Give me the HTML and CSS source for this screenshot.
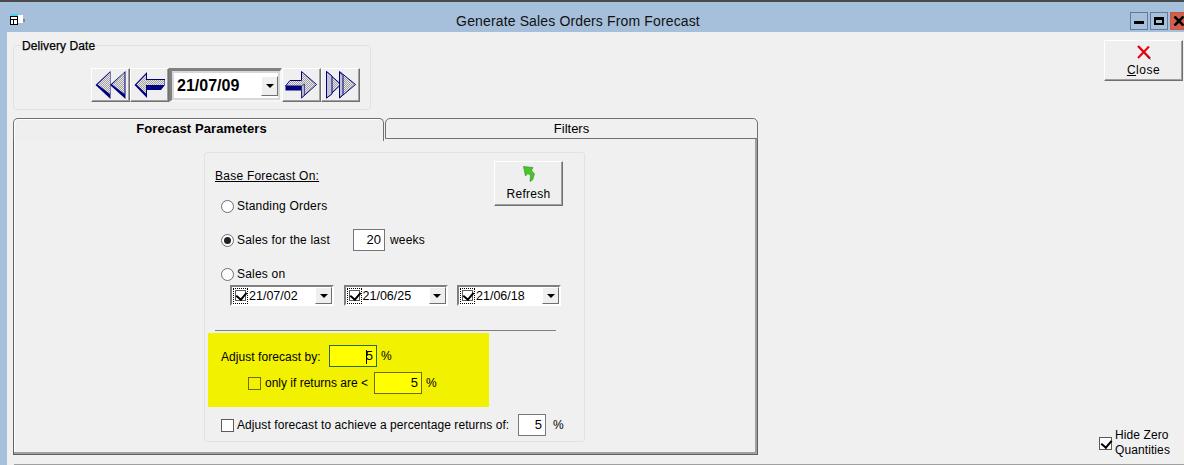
FILE: index.html
```html
<!DOCTYPE html>
<html>
<head>
<meta charset="utf-8">
<title>Generate Sales Orders From Forecast</title>
<link rel="stylesheet" href="styles.css">
</head>
<body>
<svg class="defs" width="0" height="0"><defs>
<pattern id="dither" width="2" height="2" patternUnits="userSpaceOnUse"><rect width="2" height="2" fill="#e8e8e8"/><rect width="1" height="1" fill="#a0a0a0"/><rect x="1" y="1" width="1" height="1" fill="#a0a0a0"/></pattern>
</defs></svg>
<div class="window">
  <header class="titlebar">
    <svg class="appicon" width="16" height="13" viewBox="0 0 16 13"><rect x="1" y="0" width="8" height="2" fill="#3fd6e6"/><rect x="8" y="1" width="5" height="8" fill="#fff"/><rect x="13" y="5" width="2" height="3" fill="#888"/><rect x="0.500" y="2.500" width="7" height="8" fill="#fff" stroke="#000"/><path d="M1 5.500h6M3.500 5v5" stroke="#000"/></svg>
    <h1 class="title">Generate Sales Orders From Forecast</h1>
    <div class="winbtns">
      <span class="winbtn"><i class="g-min"></i></span>
      <span class="winbtn"><i class="g-max"></i></span>
      <span class="winbtn close-x">
        <svg width="12" height="10" viewBox="0 0 12 10"><path d="M1.500 0.500L10.500 9.500M10.500 0.500L1.500 9.500" stroke="#000" stroke-width="2.600"/></svg>
      </span>
    </div>
  </header>
  <main class="client">
    <div class="leftcol">
      <section class="delivery">
        <span class="legend">Delivery Date</span>
        <div class="navrow">
          <button class="navbtn"><svg width="36" height="30" viewBox="0 0 36 30">
            <path d="M2.500 15L17.500 1V29Z" fill="#000080"/>
            <path d="M4.500 14.500L17 2.500V24Z" fill="url(#dither)"/>
            <path d="M17 15L32.500 1V29Z" fill="#000080"/>
            <path d="M19 14.500L31.500 2.500V24Z" fill="url(#dither)"/>
          </svg></button>
          <button class="navbtn"><svg width="36" height="30" viewBox="0 0 36 30">
            <path d="M2.500 15L15 28V20H29L33 15V9H15V2Z" fill="#000080"/>
            <path d="M4.500 14.500L14 4.500V10H32.500V15H14V23.500Z" fill="url(#dither)"/>
          </svg></button>
          <div class="datebox">
            <span class="dateval">21/07/09</span>
            <span class="ddbtn"><i class="caret"></i></span>
          </div>
          <button class="navbtn"><svg width="36" height="30" viewBox="0 0 36 30">
            <path d="M1.500 16V20.500H17.500V16Z" fill="#000080"/>
            <path d="M1.500 16L6 10.500H17.500V1.500L32.500 14.500L17.500 28V16Z" fill="url(#dither)" stroke="#000080"/>
            <path d="M17.500 16V28L20.500 25V14Z" fill="#b8b8c8" stroke="#000080" stroke-width="0.600"/>
          </svg></button>
          <button class="navbtn"><svg width="36" height="30" viewBox="0 0 36 30">
            <path d="M3.500 1.500L18 14.500L3.500 28Z" fill="url(#dither)" stroke="#000080"/>
            <path d="M3.500 1.500L9 6V24L3.500 28Z" fill="#c4c4d0" stroke="#000080"/>
            <path d="M16.500 1.500L32.500 14.500L16.500 28Z" fill="url(#dither)" stroke="#000080"/>
            <path d="M16.500 2L20 5.500V24.500L16.500 28Z" fill="#c4c4d0" stroke="#000080"/>
          </svg></button>
        </div>
      </section>
      <nav class="tabs">
        <div class="tab tab-active">Forecast Parameters</div>
        <div class="tab tab-back">Filters</div>
      </nav>
      <section class="page">
        <div class="group">
          <div class="basehead">
            <div class="baseopts">
              <p class="heading">Base Forecast On:</p>
              <label class="opt opt-first"><i class="radio"></i>Standing Orders</label>
              <label class="opt opt-second"><i class="radio radio-on"></i>Sales for the last<span class="field weeks">20</span><span class="weekslbl">weeks</span></label>
            </div>
            <button class="refresh">
              <svg width="12" height="16" viewBox="0 0 12 16"><path d="M0.500 0.500L10 1.500L8.500 4.500L11.500 8L9.500 14L7 15.500L7.500 9.500L5 7.500L2.500 10Z" fill="#48c42c" stroke="#2e8f1c" stroke-width="0.600"/></svg>
              <span>Refresh</span>
            </button>
          </div>
          <label class="opt opt-third"><i class="radio"></i>Sales on</label>
          <div class="dates">
            <div class="dtp"><span class="focuschk"><i class="chk chk-on"></i></span><span class="dtpval">21/07/02</span><span class="ddbtn"><i class="caret"></i></span></div>
            <div class="dtp"><span class="focuschk"><i class="chk chk-on"></i></span><span class="dtpval">21/06/25</span><span class="ddbtn"><i class="caret"></i></span></div>
            <div class="dtp"><span class="focuschk"><i class="chk chk-on"></i></span><span class="dtpval">21/06/18</span><span class="ddbtn"><i class="caret"></i></span></div>
          </div>
          <hr class="sep">
          <div class="highlight">
            <div class="adj1"><span class="adjlbl">Adjust forecast by:</span><span class="field yfield focus"><i class="cursor"></i>5</span><span class="pct">%</span></div>
            <div class="adj2"><i class="chk ychk"></i><span class="onlylbl">only if returns are &lt;</span><span class="field yfield yfield2">5</span><span class="pct">%</span></div>
          </div>
          <div class="achieve"><i class="chk"></i><span class="achlbl">Adjust forecast to achieve a percentage returns of:</span><span class="field pctfield">5</span><span class="pct pct3">%</span></div>
        </div>
      </section>
    </div>
    <aside class="rightcol">
      <button class="closebtn">
        <svg width="16" height="15" viewBox="0 0 16 15"><path d="M2 1L14 13.500" stroke="#e8000c" stroke-width="2.400"/><path d="M13 1.500L2 13" stroke="#e8000c" stroke-width="2"/><path d="M11 11L14.500 14.500" stroke="#222" stroke-width="0.800"/></svg>
        <span class="closelbl"><u>C</u>lose</span>
      </button>
      <label class="hidezero"><i class="chk chk-on"></i><span>Hide Zero<br>Quantities</span></label>
    </aside>
  </main>
  <div class="bottomline"></div>
</div>
</body>
</html>
```
FILE: styles.css
```css
* { box-sizing: border-box; }
html, body { margin: 0; padding: 0; }
body { width: 1184px; height: 465px; overflow: hidden; background: #f0f0f0; font-family: "Liberation Sans", Arial, sans-serif; font-size: 12px; color: #000; }
.defs { display: block; height: 0; }
button { font: inherit; color: inherit; margin: 0; padding: 0; }
p, h1 { margin: 0; }
i { display: block; font-style: normal; }

.window { height: 465px; display: flex; flex-direction: column; border-top: 2px solid #4a4a4a; background: #a6c0dc; }
.titlebar { flex: none; height: 30px; display: flex; align-items: center; position: relative; padding-left: 10px; }
.title { position: absolute; left: 0; width: 1156px; top: 11px; text-align: center; font-size: 14px; line-height: 16px; font-weight: normal; color: #111; letter-spacing: 0.14px; }
.appicon { margin-top: 6px; }
.winbtns { margin-left: auto; display: flex; gap: 2px; margin-top: 7px; margin-right: -4px; }
.winbtn { width: 18px; height: 18px; border: 1px solid #5f7c9d; display: flex; align-items: center; justify-content: center; background: #a6c0dc; }
.g-min { width: 10px; height: 3px; background: #000; margin-top: 4px; }
.g-max { width: 10px; height: 8px; border: 2px solid #000; border-top-width: 3px; }
.close-x { background: #d0604c; border-color: #c15a48; }

.client { flex: 1; min-height: 0; margin-left: 7px; background: #f0f0f0; display: flex; position: relative; padding: 13px 1px 0 6px; }
.leftcol { width: 745px; flex: none; }
.delivery { height: 65px; width: 358px; border: 1px solid #dce3ec; border-radius: 3px; position: relative; padding: 22px 0 0 77px; }
.legend { position: absolute; left: 7px; top: -7px; background: #f0f0f0; padding: 0 1px; line-height: 14px; font-size: 12px; -webkit-text-stroke: 0.25px #000; letter-spacing: 0.1px; }
.navrow { display: flex; align-items: center; }
.navbtn { width: 39px; height: 34px; background: #efefef; border: 1px solid; border-color: #fff #707070 #707070 #fff; box-shadow: inset -1px -1px 0 #a0a0a0; display: flex; align-items: center; justify-content: center; }
.datebox { width: 113px; height: 34px; border: solid; border-width: 3px 2px 2px 3px; border-color: #808080 #f6f6f6 #f6f6f6 #808080; display: flex; align-items: center; background: #fff; box-shadow: inset 0 0 0 2px #d8d8d8; padding: 0 2px 0 5px; }
.dateval { flex: 1; font-size: 16px; font-weight: bold; line-height: 20px; padding-top: 1px; }
.datebox .ddbtn { height: 20px; }
.ddbtn { width: 17px; height: 18px; background: #efefef; border: 1px solid; border-color: #fff #707070 #707070 #fff; display: flex; align-items: center; justify-content: center; flex: none; }
.caret { width: 0; height: 0; border: 4px solid transparent; border-top: 4px solid #000; border-bottom: 0; }

.tabs { display: flex; margin-top: 8px; height: 21px; }
.tab { text-align: center; line-height: 20px; border: 1px solid #707070; border-bottom: 0; border-radius: 5px 5px 0 0; font-size: 13px; }
.tab-active { width: 371px; padding-left: 6px; font-weight: bold; letter-spacing: 0.1px; background: #efefef; height: 23px; position: relative; z-index: 1; box-shadow: inset 1px 1px 0 #fff; }
.tab-back { width: 373px; margin-left: 1px; border-bottom: 1px solid #707070; }
.page { width: 745px; height: 316px; border: 1px solid #606060; border-top: 0; box-shadow: inset -2px -2px 0 #a0a0a0, inset 1px 0 0 #fff; padding: 13px 0 0 190px; position: relative; }
.group { width: 381px; height: 290px; border: 1px solid #dce3ec; border-radius: 3px; padding: 8px 0 0 10px; }
.basehead { display: flex; height: 106px; }
.baseopts { width: 279px; }
.heading { text-decoration: underline; line-height: 14px; margin-top: 8px; letter-spacing: 0.24px; }
.opt { display: flex; align-items: center; line-height: 14px; padding-left: 6px; letter-spacing: 0.2px; }
.opt-first { margin-top: 16px; }
.opt-second { margin-top: 16px; height: 22px; }
.opt-third { margin-top: 0; }
.radio { width: 13px; height: 13px; border: 1px solid #6e6e6e; border-radius: 50%; background: #fff; margin-right: 3px; position: relative; flex: none; }
.radio-on::after { content: ""; position: absolute; left: 2px; top: 2px; width: 7px; height: 7px; background: #222; border-radius: 50%; }
.field { display: block; height: 22px; border: 1px solid #767676; background: #fff; text-align: right; line-height: 20px; padding-right: 3px; font-size: 13px; position: relative; letter-spacing: 0; }
.weeks { width: 32px; margin-left: 23px; }
.weekslbl { margin-left: 5px; }
.refresh { width: 69px; height: 45px; background: #efefef; border: 1px solid; border-color: #fff #707070 #707070 #fff; box-shadow: inset -1px -1px 0 #a0a0a0; display: flex; flex-direction: column; align-items: center; padding-top: 4px; line-height: 14px; letter-spacing: 0.3px; }
.refresh span { margin-top: 5px; }
.dates { display: flex; gap: 9.5px; margin: 4px 0 0 15px; }
.dtp { width: 104px; height: 21px; border: 2px solid #808080; border-right-color: #fff; border-bottom-color: #fff; background: #fff; display: flex; align-items: center; padding: 0 0 0 1px; }
.dtp .ddbtn { height: 17px; }
.focuschk { width: 15px; height: 16px; border: 1px dotted #000; display: flex; align-items: center; justify-content: center; flex: none; }
.focuschk .chk { width: 11px; height: 11px; }
.focuschk .chk-on::after { left: 2px; top: -1px; width: 5px; height: 8px; }
.dtpval { flex: 1; padding-left: 1px; font-size: 12.5px; }
.chk { width: 13px; height: 13px; border: 1px solid #5c5c5c; background: #fff; position: relative; flex: none; }
.chk-on::after { content: ""; position: absolute; left: 3px; top: 0; width: 5px; height: 8px; border: solid #000; border-width: 0 2px 2px 0; transform: rotate(40deg); }
.sep { border: 0; height: 1px; background: #808080; width: 341px; margin: 24px 0 2px 0; }
.highlight { width: 281px; height: 74px; background: #f2f200; margin-left: -7px; padding: 12px 0 0 13px; }
.adj1, .adj2 { display: flex; align-items: center; }
.adjlbl { width: 108px; letter-spacing: 0.05px; margin-top: 2px; }
.yfield { background: #ffff00; border-color: #5c6b1a; }
.focus { width: 48px; border-color: #2f6b2f; }
.cursor { position: absolute; right: 9px; top: 4px; width: 1px; height: 14px; background: #000; }
.pct { margin-left: 4px; }
.adj2 { margin-top: 5px; padding-left: 27px; }
.ychk { background: transparent; border-color: #6b6b1a; margin-right: 4px; }
.onlylbl { width: 109px; }
.yfield2 { width: 48px; border-color: #6b6b1a; }
.achieve { display: flex; align-items: center; margin-top: 7px; padding-left: 6px; }
.achieve .chk { margin-right: 3px; }
.achlbl { width: 281px; letter-spacing: 0.08px; }
.pctfield { width: 28px; }
.pct3 { margin-left: 7px; }

.rightcol { flex: 1; position: relative; }
.closebtn { position: absolute; right: 0; top: -5px; width: 79px; height: 41px; background: #efefef; border: 1px solid; border-color: #fff #707070 #707070 #fff; box-shadow: inset -1px -1px 0 #a0a0a0; display: flex; flex-direction: column; align-items: center; padding-top: 4px; line-height: 14px; }
.closelbl { margin-top: 3px; letter-spacing: 0.5px; }
.hidezero { position: absolute; right: 13px; top: 383px; display: flex; align-items: center; gap: 3px; line-height: 15px; letter-spacing: 0.1px; }
.bottomline { position: absolute; left: 14px; right: 0; top: 464px; height: 1px; background: #a0a0a0; }
```
